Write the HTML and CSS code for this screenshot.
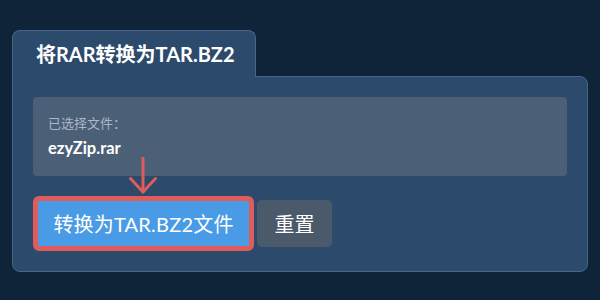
FILE: index.html
```html
<!DOCTYPE html>
<html lang="zh">
<head>
    <meta charset="UTF-8">
    <meta name="viewport" content="width=device-width, initial-scale=1.0">
    <title>将RAR转换为TAR.BZ2</title>

    <link rel="stylesheet" href="styles.css">
</head>
<body>

<div class="converter">
    <div class="tab">将RAR转换为TAR.BZ2</div>

    <div class="panel">
        <!-- Selected file -->
        <div class="file-box">
            <div class="file-label">已选择文件：</div>
            <div class="file-name">ezyZip.rar</div>
        </div>

        <div class="actions">
            <div class="convert-wrap">
                <svg class="hint-arrow" width="28" height="37" viewBox="0 0 28 37">
                    <line x1="14" y1="1" x2="14" y2="35"></line>
                    <polyline points="1.5,21.5 14,35 26.5,21.5"></polyline>
                </svg>
                <button class="convert-button">转换为TAR.BZ2文件</button>
            </div>
            <button class="reset-button">重置</button>
        </div>
    </div>
</div>

</body>
</html>
```

FILE: styles.css
```css
body {
    font-family: Lato, "Noto Sans CJK SC", sans-serif;
    margin: 0;
    padding: 30px 12px;
    background-color: #0f2339;
    color: #fff;
}

.converter {
    display: flex;
    flex-direction: column;
    align-items: flex-start;
}

.tab {
    height: 46px;
    line-height: 46px;
    padding: 0 20px 0 23px;
    background-color: #2c4a6b;
    border: 1px solid #4a6585;
    border-bottom: none;
    border-radius: 8px 8px 0 0;
    font-size: 20px;
    font-weight: bold;
    margin-bottom: -1px;
    position: relative;
    z-index: 1;
}

.panel {
    align-self: stretch;
    background-color: #2c4a6b;
    border: 1px solid #4a6585;
    border-radius: 0 8px 8px 8px;
    padding: 20px;
}

.file-box {
    background-color: #4b5f77;
    border-radius: 4px;
    padding: 16px 15px 17px;
}

.file-label {
    font-size: 13px;
    line-height: 20px;
    color: #aab7c7;
    margin-bottom: 4px;
}

.file-name {
    font-size: 16.5px;
    line-height: 22px;
    font-weight: bold;
}

.actions {
    display: flex;
    align-items: center;
    gap: 3px;
    margin-top: 20px;
}

.convert-wrap {
    position: relative;
}

.hint-arrow {
    position: absolute;
    left: 96px;
    top: -39px;
    fill: none;
    stroke: #e05c5a;
    stroke-width: 3;
    stroke-linecap: round;
    stroke-linejoin: round;
}

.convert-button {
    display: block;
    box-sizing: border-box;
    width: 221px;
    height: 55px;
    padding: 0;
    background-color: #4a9be6;
    border: 5px solid #e05c5a;
    border-radius: 6px;
    color: #fff;
    font-family: inherit;
    font-size: 20px;
    letter-spacing: 0.2px;
    cursor: pointer;
}

.reset-button {
    box-sizing: border-box;
    width: 75px;
    height: 47px;
    padding: 0;
    background-color: #4b5a6b;
    border: none;
    border-radius: 5px;
    color: #fff;
    font-family: inherit;
    font-size: 20px;
    cursor: pointer;
}
```
